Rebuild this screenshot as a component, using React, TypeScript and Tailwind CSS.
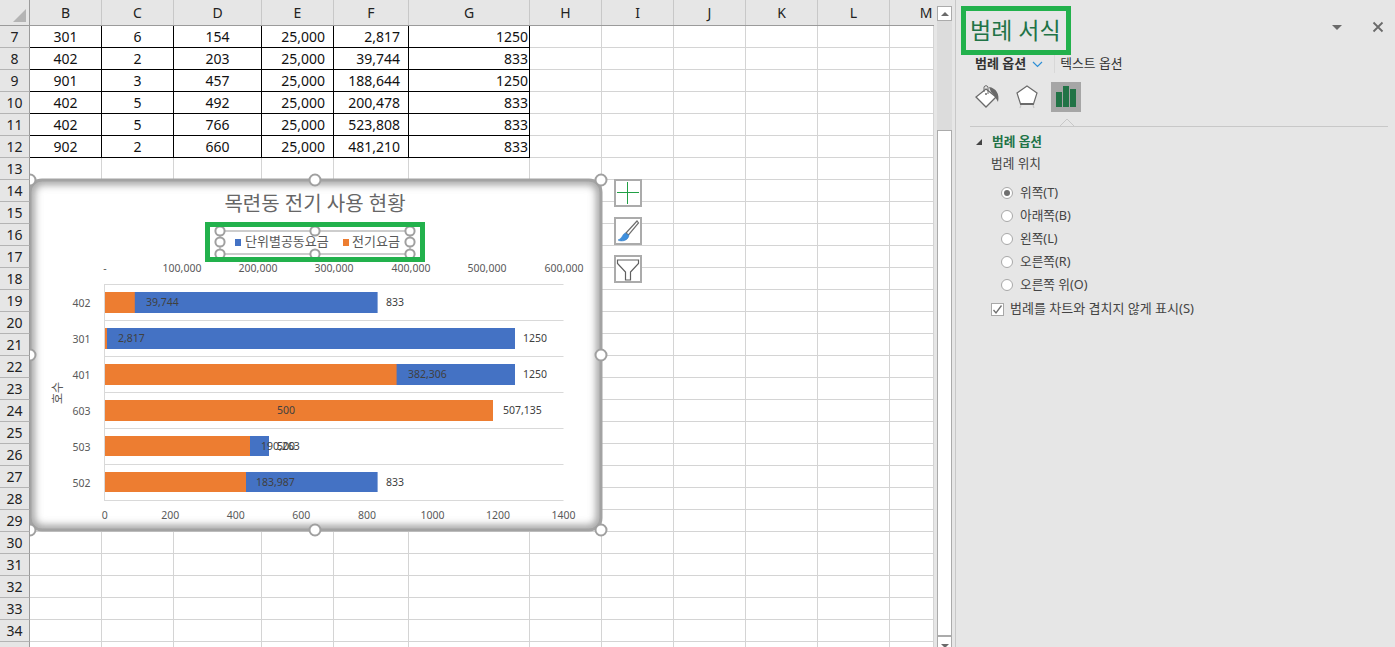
const FONT = "font-['Noto_Sans','Noto_Sans_CJK_KR',sans-serif]";
const COLS = [
  { n: "B", w: "w-[72px]" },
  { n: "C", w: "w-[72px]" },
  { n: "D", w: "w-[88px]" },
  { n: "E", w: "w-[72px]" },
  { n: "F", w: "w-[75px]" },
  { n: "G", w: "w-[121px]" },
  { n: "H", w: "w-[72px]" },
  { n: "I", w: "w-[72px]" },
  { n: "J", w: "w-[72px]" },
  { n: "K", w: "w-[72px]" },
  { n: "L", w: "w-[72px]" },
  { n: "M", w: "w-[44px]" },
];
const DATA: Record<number, string[]> = {
  7: ["301", "6", "154", "25,000", "2,817", "1250"],
  8: ["402", "2", "203", "25,000", "39,744", "833"],
  9: ["901", "3", "457", "25,000", "188,644", "1250"],
  10: ["402", "5", "492", "25,000", "200,478", "833"],
  11: ["402", "5", "766", "25,000", "523,808", "833"],
  12: ["902", "2", "660", "25,000", "481,210", "833"],
};
const ROWS = Array.from({ length: 29 }, (_, i) => i + 7);

function Sheet() {
  return (
    <div className="relative w-[934px] shrink-0 overflow-hidden bg-white h-[647px]">
      <div className="flex h-[26px] bg-[#e6e6e6] border-b border-[#9b9b9b]">
        <div className="relative w-[30px] border-r border-[#9b9b9b]">
          <div className="absolute right-[3px] bottom-[3px] w-0 h-0 border-l-[13px] border-l-transparent border-b-[13px] border-b-[#b4b4b4]" />
        </div>
        {COLS.map((c) => (
          <div key={c.n} className={`${c.w} flex items-center justify-center border-r border-[#c8c8c8] text-[14px] text-[#222] ${c.n === "M" ? "pl-[28px] border-r-0" : ""}`}>
            {c.n}
          </div>
        ))}
      </div>
      {ROWS.map((r) => {
        const d = DATA[r];
        return (
          <div key={r} className="flex h-[22px]">
            <div className="w-[30px] flex items-center justify-center bg-[#e6e6e6] border-r border-b text-[14px] text-[#222] border-r-[#9b9b9b] border-b-[#b4b4b4]">
              {r < 35 ? r : null}
            </div>
            {COLS.map((c, i) => {
              const v = d && d[i];
              const inTable = d && i < 6;
              const align = i < 3 ? "justify-center" : i === 5 ? "justify-end pr-[1px]" : "justify-end pr-[8px]";
              return (
                <div key={c.n} className={`${c.w} flex items-center border-b border-r text-[14px] text-[#111] ${inTable ? `border-black ${align}` : "border-[#d4d4d4]"}`}>
                  {inTable ? v : null}
                </div>
              );
            })}
          </div>
        );
      })}
      <Chart />
      <SideButtons />
    </div>
  );
}

function Handle({ x, y, r = 5.5 }: { x: number; y: number; r?: number }) {
  return <circle cx={x} cy={y} r={r} fill="#fff" stroke="#a0a0a0" strokeWidth="2" />;
}

const BARS = [
  { c: "402", y: 292, h: 21, o: 134.8, b: 377.6 },
  { c: "301", y: 328, h: 21, o: 107, b: 515 },
  { c: "401", y: 364, h: 21, o: 396.6, b: 515 },
  { c: "603", y: 400, h: 21, o: 493, b: 0 },
  { c: "503", y: 436, h: 20, o: 250, b: 269 },
  { c: "502", y: 472, h: 20, o: 246, b: 377.6 },
];
const LABELS: [string, number, number, "start" | "middle"][] = [
  ["39,744", 146, 306, "start"],
  ["833", 386, 306, "start"],
  ["2,817", 118, 342, "start"],
  ["1250", 523, 342, "start"],
  ["382,306", 408, 378, "start"],
  ["1250", 523, 378, "start"],
  ["500", 286, 414, "middle"],
  ["507,135", 503, 414, "start"],
  ["190,263", 261, 450, "start"],
  ["500", 277, 450, "start"],
  ["183,987", 256, 486, "start"],
  ["833", 386, 486, "start"],
];
const TOP = [
  ["-", 105],
  ["100,000", 182],
  ["200,000", 258],
  ["300,000", 334],
  ["400,000", 411],
  ["500,000", 487],
  ["600,000", 564],
] as [string, number][];
const BOTTOM = [0, 200, 400, 600, 800, 1000, 1200, 1400];

function Chart() {
  return (
    <svg className="absolute left-[30px] top-0 pointer-events-none" width="590" height="647" viewBox="30 0 590 647">
      <defs>
        <filter id="inner" x="-5%" y="-5%" width="110%" height="110%">
          <feGaussianBlur stdDeviation="4" />
        </filter>
        <clipPath id="cl">
          <rect x="30" y="180" width="571" height="350" rx="12" />
        </clipPath>
      </defs>
      <rect x="30" y="180" width="571" height="350" rx="12" fill="#fff" />
      <g clipPath="url(#cl)">
        <rect x="30" y="180" width="571" height="350" rx="12" fill="none" stroke="#8c8c8c" strokeWidth="8" filter="url(#inner)" />
      </g>
      <rect x="30" y="180" width="571" height="350" rx="12" fill="none" stroke="#a3a3a3" strokeWidth="3" />

      <text x="315" y="211" textAnchor="middle" fontSize="20" fill="#666666">목련동 전기 사용 현황</text>

      <rect x="220" y="231" width="190" height="23" fill="none" stroke="#bdbdbd" strokeWidth="1.5" />
      <rect x="235" y="239" width="6" height="7" fill="#4472c4" />
      <text x="245" y="246" fontSize="13" fill="#595959">단위별공동요금</text>
      <rect x="343" y="239" width="6" height="7" fill="#ed7d31" />
      <text x="352" y="246" fontSize="13" fill="#595959">전기요금</text>
      {[220, 315, 410].map((x) => [231, 254].map((y) => <Handle key={`${x}${y}`} x={x} y={y} r={4.6} />))}
      {[220, 410].map((x) => <Handle key={x} x={x} y={242} r={4.6} />)}
      <rect x="207.5" y="224.5" width="215" height="35" fill="none" stroke="#22b14c" strokeWidth="5" />

      {TOP.map(([t, x]) => (
        <text key={x} x={x} y="272" textAnchor="middle" fontSize="10.5" fill="#595959">{t}</text>
      ))}

      {[284, 320, 356, 392, 428, 464, 500].map((y) => (
        <line key={y} x1="104" x2="563.5" y1={y + 0.5} y2={y + 0.5} stroke="#d9d9d9" />
      ))}
      <line x1="104.5" x2="104.5" y1="284" y2="501" stroke="#d9d9d9" />

      {BARS.map((b) => (
        <g key={b.c}>
          {b.b > 0 && <rect x="105" y={b.y} width={b.b - 105} height={b.h} fill="#4472c4" />}
          <rect x="105" y={b.y} width={b.o - 105} height={b.h} fill="#ed7d31" />
          <text x="90.5" y={b.y + 14.5} textAnchor="end" fontSize="10.5" fill="#595959">{b.c}</text>
        </g>
      ))}
      {LABELS.map(([t, x, y, a], i) => (
        <text key={i} x={x} y={y} textAnchor={a} fontSize="10.5" fill="#404040">{t}</text>
      ))}
      {BOTTOM.map((v, i) => (
        <text key={v} x={104.8 + i * 65.53} y="519" textAnchor="middle" fontSize="10.5" fill="#595959">{v}</text>
      ))}
      <text x="0" y="0" fontSize="12" fill="#595959" textAnchor="middle" transform="translate(62 393) rotate(-90)">호수</text>

      {[[30, 180], [315, 180], [601, 180], [30, 355], [601, 355], [30, 530], [315, 530], [601, 530]].map(([x, y]) => (
        <Handle key={`${x}-${y}`} x={x} y={y} />
      ))}
    </svg>
  );
}

function SideButtons() {
  const cls = "w-[28px] h-[28px] bg-white border-2 border-[#ababab] flex items-center justify-center";
  return (
    <div className="absolute left-[614px] top-[179px] flex flex-col gap-[10px]">
      <div className={cls}>
        <svg width="24" height="24" viewBox="0 0 24 24">
          <path d="M11.5 1v22M1 11.5h22" stroke="#21a045" strokeWidth="1" fill="none" />
        </svg>
      </div>
      <div className={cls}>
        <svg width="24" height="24" viewBox="0 0 24 24">
          <path d="M21 2 L10 14 L12.5 16 L22.5 4 Z" fill="#fff" stroke="#6e6e6e" strokeWidth="1.2" />
          <path d="M9.5 14 C6 15 7 19 2 21 C5 23 12 22 13 16.5 Z" fill="#3f8fdc" stroke="#2f78c2" strokeWidth="0.5" />
        </svg>
      </div>
      <div className={cls}>
        <svg width="24" height="24" viewBox="0 0 24 24">
          <path d="M1.5 3 H22.5 V6.5 L14.5 15 V23 H9.5 V15 L1.5 6.5 Z" fill="#fff" stroke="#5f5f5f" strokeWidth="1.2" />
        </svg>
      </div>
    </div>
  );
}

function Scrollbar() {
  return (
    <div className="w-[21px] h-[647px] shrink-0 bg-[#e6e6e6] pl-[3px] pr-[3px] pt-[6px] flex flex-col">
      <div className="h-[15px] bg-white border border-[#ababab] flex items-center justify-center shrink-0">
        <div className="w-0 h-0 border-l-[4px] border-r-[4px] border-b-[4px] border-l-transparent border-r-transparent border-b-[#6a6a6a]" />
      </div>
      <div className="h-[109px] bg-[#dcdcdc] shrink-0" />
      <div className="h-[507px] bg-white border border-[#ababab] border-b-2 shrink-0" />
      <div className="h-[10px] flex justify-center pt-[7px] bg-white border-x border-[#ababab]">
        <div className="w-0 h-0 border-l-[4px] border-r-[4px] border-t-[4px] border-l-transparent border-r-transparent border-t-[#6a6a6a]" />
      </div>
    </div>
  );
}

function Radio({ label, on }: { label: string; on?: boolean }) {
  return (
    <div className="flex items-center h-[23px]">
      <div className="w-[12px] h-[12px] rounded-full bg-white border border-[#a8a8a8] flex items-center justify-center">
        {on && <div className="w-[6px] h-[6px] rounded-full bg-[#707070]" />}
      </div>
      <span className="ml-[7px] text-[12.7px] text-[#444]">{label}</span>
    </div>
  );
}

function Panel() {
  return (
    <div className="relative flex-1 h-[647px] bg-[#e6e6e6] border-l border-[#c8c8c8] pl-[14px] pr-[7px] flex flex-col">
      <div className="absolute left-[5px] top-[6px] w-[110px] h-[49px] border-[5px] border-[#22b14c] flex items-center pl-[4px] text-[23px] leading-none whitespace-nowrap text-[#217346]">
        범례 서식
      </div>
      <div className="absolute left-[376px] top-[25px] w-0 h-0 border-l-[5px] border-r-[5px] border-t-[5px] border-l-transparent border-r-transparent border-t-[#6a6a6a]" />
      <svg className="absolute left-[416px] top-[21px]" width="12" height="12" viewBox="0 0 12 12">
        <path d="M1.5 1.5 L10.5 10.5 M10.5 1.5 L1.5 10.5" stroke="#6a6a6a" strokeWidth="1.8" />
      </svg>
      <div className="h-[54px] shrink-0" />
      <div className="flex items-center h-[20px] pl-[5px]">
        <span className="text-[13px] font-bold text-[#333]">범례 옵션</span>
        <svg className="ml-[6px]" width="11" height="7" viewBox="0 0 11 7">
          <path d="M1 1 L5.5 5.5 L10 1" stroke="#2e8fd6" strokeWidth="1.2" fill="none" />
        </svg>
        <div className="ml-[11px] w-px h-[18px] bg-[#d8d8d8]" />
        <span className="ml-[5px] text-[12.8px] text-[#333]">텍스트 옵션</span>
      </div>
      <div className="flex items-center mt-[8px] h-[30px] pl-[3px] gap-[13px]">
        <div className="w-[27px] h-[30px] flex items-center justify-center">
          <svg width="26" height="26" viewBox="0 0 26 26">
            <path d="M12 5 L22 13 L12 23 L2 13 Z" fill="#fff" stroke="#6a6a6a" strokeWidth="1.3" />
            <path d="M10 8 V3 A2.2 2.2 0 0 1 14 3 V10" fill="none" stroke="#6a6a6a" strokeWidth="1" />
            <circle cx="12" cy="10" r="1" fill="#6a6a6a" />
            <path d="M15 3 C22 4 26 10 24 18 C22 14 20 11 17 8 Z" fill="#6a6a6a" />
          </svg>
        </div>
        <div className="w-[27px] h-[30px] flex items-center justify-center">
          <svg width="24" height="26" viewBox="0 0 24 26">
            <path d="M12 2 L22 9 L18.5 20 H5.5 L2 9 Z" fill="#fff" stroke="#6a6a6a" strokeWidth="1.2" />
            <path d="M5 20 H19" stroke="#6a6a6a" strokeWidth="2" />
            <path d="M6 21 L5 24 M18 21 L19 24" stroke="#c8c8c8" strokeWidth="1.2" />
          </svg>
        </div>
        <div className="w-[30px] h-[30px] bg-[#a6a6a6] flex items-end justify-center gap-px pb-[5px] ml-[-2px]">
          <div className="w-[6px] h-[15px] bg-[#217346]" />
          <div className="w-[6px] h-[21px] bg-[#217346]" />
          <div className="w-[6px] h-[18px] bg-[#217346]" />
        </div>
      </div>
      <div className="relative mt-[14px] h-px bg-[#c8c8c8] shrink-0">
        <svg className="absolute left-[90px] top-[-7px]" width="14" height="8" viewBox="0 0 14 8">
          <path d="M0 7 L7 0 L14 7" fill="#e6e6e6" stroke="#c8c8c8" />
        </svg>
      </div>
      <div className="flex items-center h-[20px] mt-[5px] pl-[6px]">
        <div className="mr-[7px] w-0 h-0 border-b-[6px] border-l-[6px] border-b-[#444] border-l-transparent" />
        <span className="ml-[3px] text-[12.7px] font-bold text-[#217346]">범례 옵션</span>
      </div>
      <div className="h-[24px] flex items-center pl-[21px] text-[12.7px] text-[#444]">범례 위치</div>
      <div className="pl-[31px] mt-[5px]">
        <Radio label="위쪽(T)" on />
        <Radio label="아래쪽(B)" />
        <Radio label="왼쪽(L)" />
        <Radio label="오른쪽(R)" />
        <Radio label="오른쪽 위(O)" />
      </div>
      <div className="flex items-center h-[20px] mt-[3px] pl-[21px]">
        <div className="w-[13px] h-[13px] bg-white border border-[#a8a8a8] flex items-center justify-center">
          <svg width="11" height="11" viewBox="0 0 11 11">
            <path d="M1.5 6 L4 9 L9.5 1.5" stroke="#707070" strokeWidth="1.3" fill="none" />
          </svg>
        </div>
        <span className="ml-[6px] text-[13px] text-[#444]">범례를 차트와 겹치지 않게 표시(S)</span>
      </div>
    </div>
  );
}

export default function App() {
  return (
    <div className={`flex w-[1395px] h-[647px] overflow-hidden bg-[#e6e6e6] ${FONT}`}>
      <Sheet />
      <Scrollbar />
      <Panel />
    </div>
  );
}
